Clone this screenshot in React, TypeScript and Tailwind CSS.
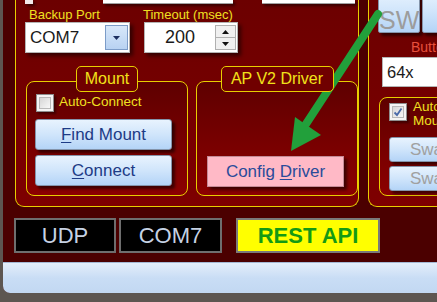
import type { ReactNode } from "react";

const BlueButton = ({ children, className }: { children: ReactNode; className: string }) => (
    <div
        className={`flex items-center justify-center rounded-[3px] border border-[#8494aa] bg-gradient-to-b from-[#e8f3fe] via-[#d0e5fb] to-[#b4d4f7] shadow-[3px_3px_3px_rgba(0,0,0,0.55)] ${className}`}
    >
        {children}
    </div>
);

const CheckBox = ({ checked }: { checked?: boolean }) => (
    <div className="w-[18px] h-[18px] shrink-0 border border-[#8f8f8f] bg-[#f4f4f4] p-[2px] shadow-[2px_2px_2px_rgba(0,0,0,0.4)]">
        <div className="w-full h-full border border-[#b8b8b8] bg-gradient-to-br from-[#d6d6d6] to-[#f8f8f8] flex items-center justify-center">
            {checked && (
                <svg width="10" height="10" viewBox="0 0 10 10">
                    <path d="M1.5 5.5 L4 8 L8.5 1.5" fill="none" stroke="#4a6aa8" strokeWidth="1.8" />
                </svg>
            )}
        </div>
    </div>
);

const GroupTitle = ({ children, width }: { children: ReactNode; width: string }) => (
    <div
        className={`relative z-10 -mb-[11px] h-[26px] flex items-center justify-center border border-[#e8cf00] rounded-[5px] bg-[#700000] text-[16px] text-[#f2e21a] ${width}`}
    >
        {children}
    </div>
);

const LeftPanel = () => (
    <div className="w-[349px] h-[207px] flex flex-col border-x border-b border-[#e8cf00] rounded-b-[9px] bg-gradient-to-b from-[#6c0000] to-[#7e0000]">
        {/* bottoms of the inputs above */}
        <div className="flex h-[4px]">
            <div className="ml-[9px] w-[8px] bg-[#f2e8e8] shadow-[2px_2px_3px_rgba(0,0,0,0.5)]" />
            <div className="ml-[70px] w-[130px] bg-white border-b border-[#a0a0a0] shadow-[2px_2px_3px_rgba(0,0,0,0.5)]" />
            <div className="ml-[29px] w-[93px] bg-white border-b border-[#a0a0a0] shadow-[2px_2px_3px_rgba(0,0,0,0.5)]" />
        </div>

        <div className="flex mt-[3px] ml-[9px]">
            <div className="flex flex-col w-[105px]">
                <span className="pl-[4px] h-[15px] leading-[15px] text-[13px] text-[#f0e020]">Backup Port</span>
                <div className="h-[31px] flex items-center bg-white border border-[#b4b4b4] shadow-[3px_3px_4px_rgba(0,0,0,0.55)]">
                    <span className="flex-1 pl-[4px] text-[17px] text-[#1a1a1a]">COM7</span>
                    <div className="mr-[1px] w-[23px] h-[25px] flex items-center justify-center border border-[#7c9cc8] bg-gradient-to-b from-[#d8e8fa] to-[#b8d2f2]">
                        <svg width="7" height="4" viewBox="0 0 7 4">
                            <path d="M0 0 H7 L3.5 4 Z" fill="#1c2f60" />
                        </svg>
                    </div>
                </div>
            </div>
            <div className="flex flex-col w-[94px] ml-[14px]">
                <span className="-ml-[1px] h-[15px] leading-[15px] text-[13px] text-[#f0e020] whitespace-nowrap">Timeout (msec)</span>
                <div className="h-[31px] flex items-center bg-white border border-[#b4b4b4] shadow-[3px_3px_4px_rgba(0,0,0,0.55)]">
                    <span className="flex-1 text-center text-[18px] text-[#1a1a1a]">200</span>
                    <div className="mr-[1px] w-[21px] h-[25px] flex flex-col border border-[#b0b0b0]">
                        <div className="flex-1 flex items-center justify-center bg-[#f0f0f0] border-b border-[#b0b0b0]">
                            <svg width="7" height="4" viewBox="0 0 7 4">
                                <path d="M0 4 H7 L3.5 0 Z" fill="#111" />
                            </svg>
                        </div>
                        <div className="flex-1 flex items-center justify-center bg-[#f0f0f0]">
                            <svg width="7" height="4" viewBox="0 0 7 4">
                                <path d="M0 0 H7 L3.5 4 Z" fill="#111" />
                            </svg>
                        </div>
                    </div>
                </div>
            </div>
        </div>

        <div className="flex gap-[8px] ml-[10px] mt-[13px]">
            <div className="flex flex-col items-center w-[162px]">
                <GroupTitle width="w-[62px]">Mount</GroupTitle>
                <div className="w-full h-[115px] flex flex-col pl-[8px] pt-[12px] border border-[#e8cf00] rounded-[8px] bg-gradient-to-b from-[#5e0000] via-[#760000] to-[#8c0000]">
                    <div className="flex items-center ml-[1px] h-[17px]">
                        <CheckBox />
                        <span className="ml-[5px] text-[13.5px] text-[#f0e020]">Auto-Connect</span>
                    </div>
                    <BlueButton className="mt-[8px] w-[137px] h-[31px]">
                        <span className="text-[17px] text-[#1d3b86]">
                            <span className="underline underline-offset-2">F</span>ind Mount
                        </span>
                    </BlueButton>
                    <BlueButton className="mt-[5px] w-[137px] h-[31px]">
                        <span className="text-[17px] text-[#1d3b86]">
                            <span className="underline underline-offset-2">C</span>onnect
                        </span>
                    </BlueButton>
                </div>
            </div>
            <div className="flex flex-col items-center w-[162px]">
                <GroupTitle width="w-[113px]">AP V2 Driver</GroupTitle>
                <div className="w-full h-[115px] flex flex-col pl-[10px] pt-[74px] border border-[#e8cf00] rounded-[8px] bg-gradient-to-b from-[#5e0000] via-[#760000] to-[#8c0000]">
                    <div className="w-[137px] h-[31px] flex items-center justify-center border border-[#c48a96] bg-[#ffb9c6] shadow-[3px_3px_3px_rgba(0,0,0,0.55)]">
                        <span className="text-[17px] text-[#2a4b9a]">
                            Config <span className="underline underline-offset-2">D</span>river
                        </span>
                    </div>
                </div>
            </div>
        </div>
    </div>
);

const RightPanel = () => (
    <div className="w-[80px] h-[207px] shrink-0 flex flex-col border-l border-b border-[#e8cf00] rounded-bl-[9px] bg-gradient-to-b from-[#6c0000] to-[#7e0000]">
        <div className="flex -mt-[10px] ml-[9px] gap-[2px] h-[43px]">
            <BlueButton className="w-[48px] h-[43px] !items-start pt-[17px] !rounded-[2px]">
                <span className="text-[25px] leading-none text-[#9c9c9c]">SW</span>
            </BlueButton>
            <BlueButton className="w-[40px] h-[43px] !rounded-[2px]">
                <span />
            </BlueButton>
        </div>
        <span className="mt-[7px] ml-[42px] h-[15px] leading-[15px] text-[14px] text-[#e8503c] whitespace-nowrap">Buttons</span>
        <div className="mt-[2px] ml-[13px] w-[70px] h-[30px] flex items-center pl-[4px] bg-white border border-[#b4b4b4] shrink-0">
            <span className="text-[16.5px] text-[#1a1a1a]">64x</span>
        </div>
        <div className="mt-[10px] ml-[10px] w-[80px] h-[99px] shrink-0 flex flex-col pl-[9px] pt-[5px] border border-[#e8cf00] rounded-[8px] bg-gradient-to-b from-[#5e0000] via-[#760000] to-[#8c0000]">
            <div className="flex items-start h-[18px]">
                <CheckBox checked />
                <span className="ml-[6px] -mt-[3px] text-[13.5px] leading-[14px] text-[#f0e020] whitespace-nowrap">
                    Auto-Connect
                    <br />
                    Mount
                </span>
            </div>
            <BlueButton className="mt-[16px] w-[70px] h-[25px] !justify-start pl-[20px]">
                <span className="text-[17px] text-[#a0a0a0]">Swap</span>
            </BlueButton>
            <BlueButton className="mt-[4px] w-[70px] h-[25px] !justify-start pl-[20px]">
                <span className="text-[17px] text-[#a0a0a0]">Swap</span>
            </BlueButton>
        </div>
    </div>
);

const StatusRow = () => (
    <div className="h-[55px] flex pl-[11px] pt-[11px]">
        <div className="w-[102px] h-[35px] flex items-center justify-center border-2 border-[#6e6e6e] bg-black text-[22px] text-[#c6d2e4]">
            UDP
        </div>
        <div className="ml-[3px] w-[103px] h-[35px] flex items-center justify-center border-2 border-[#6e6e6e] bg-black text-[22px] text-[#c6d2e4]">
            COM7
        </div>
        <div className="ml-[14px] w-[144px] h-[35px] flex items-center justify-center border-2 border-[#7a7a7a] bg-[#ffff00] text-[22px] font-bold text-[#149a14]">
            REST API
        </div>
    </div>
);

const Arrow = () => (
    <svg className="absolute inset-0 pointer-events-none" width="437" height="302" viewBox="0 0 437 302">
        <line x1="378" y1="14" x2="306" y2="124" stroke="#22a03b" strokeWidth="8" strokeLinecap="round" />
        <polygon points="291,151 321,135 295,117" fill="#22a03b" />
    </svg>
);

export default function App() {
    return (
        <div className="relative w-[437px] h-[302px] overflow-hidden bg-[#5d5651] font-['Liberation_Sans',Arial,sans-serif]">
            <div className="ml-[3px] w-[434px] h-[293px] flex flex-col overflow-hidden rounded-bl-[7px] bg-[#4b0000]">
                <div className="flex h-[207px] pl-[12px] gap-[9px] shrink-0">
                    <LeftPanel />
                    <RightPanel />
                </div>
                <StatusRow />
                <div className="h-[31px] shrink-0 border-t border-[#a4b8d4] bg-gradient-to-b from-[#e4eefa] via-[#c9ddf5] to-[#c2d8f2]" />
            </div>
            <Arrow />
        </div>
    );
}
